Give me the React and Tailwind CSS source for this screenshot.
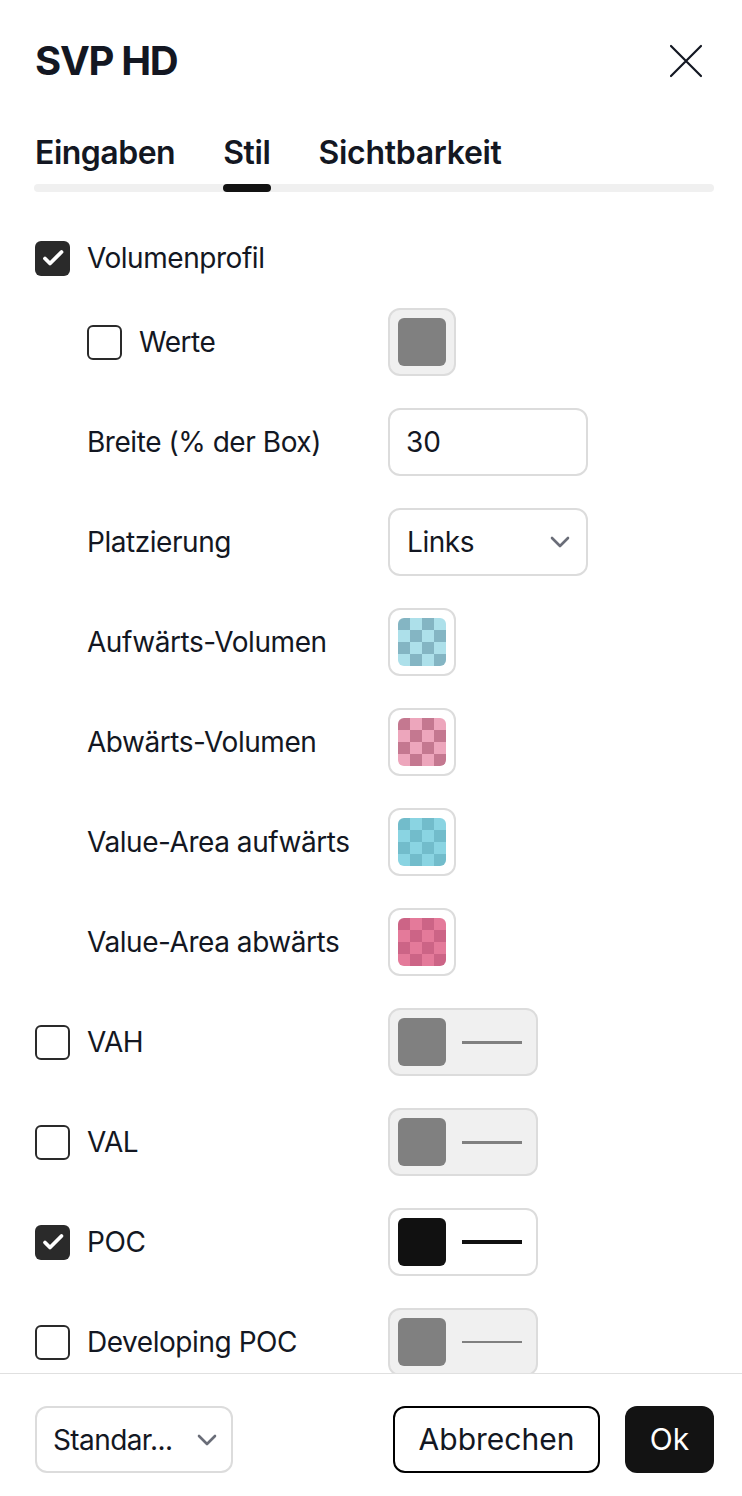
import React from 'react';

const SWATCHES = {
    up: { dark: 'bg-[#84b5c3]', light: 'bg-[#ade0ea]' },
    down: { dark: 'bg-[#c47890]', light: 'bg-[#eda6bc]' },
    vaUp: { dark: 'bg-[#72bccb]', light: 'bg-[#8ad4e2]' },
    vaDown: { dark: 'bg-[#cc6486]', light: 'bg-[#e47a9a]' },
};

function Checkbox({ checked }) {
    if (checked) {
        return (
            <div className="w-[35px] h-[35px] shrink-0 rounded-[6px] bg-[#2a2a2a] flex items-center justify-center">
                <svg width="24" height="24" viewBox="0 0 24 24" fill="none">
                    <path d="M4 12.5l5 5L20.5 6" stroke="#fff" strokeWidth="3.8" strokeLinecap="round" strokeLinejoin="round" />
                </svg>
            </div>
        );
    }
    return <div className="w-[35px] h-[35px] shrink-0 rounded-[6px] border-2 border-[#2a2a2a] bg-white" />;
}

function Chevron() {
    return (
        <svg width="20" height="12" viewBox="0 0 20 12" fill="none">
            <path d="M2 2l8 8 8-8" stroke="#6a6d78" strokeWidth="2.6" strokeLinecap="round" strokeLinejoin="round" />
        </svg>
    );
}

function Checker({ colors }) {
    const cells = [];
    for (let r = 0; r < 4; r++) {
        for (let c = 0; c < 4; c++) {
            cells.push(<div key={r + '-' + c} className={(r + c) % 2 === 0 ? colors.dark : colors.light} />);
        }
    }
    return <div className="w-[48px] h-[48px] rounded-[6px] overflow-hidden grid grid-cols-4 grid-rows-4">{cells}</div>;
}

function SwatchButton({ children, disabled, wide }) {
    return (
        <div
            className={
                'h-[68px] rounded-[12px] border-2 border-[#dcdcdc] flex items-center pl-[8px] gap-[16px] ' +
                (wide ? 'w-[150px] ' : 'w-[68px] ') +
                (disabled ? 'bg-[#f0f0f0]' : 'bg-white')
            }
        >
            {children}
        </div>
    );
}

function LineSwatch({ disabled, color, line }) {
    return (
        <SwatchButton disabled={disabled} wide>
            <div className={'w-[48px] h-[48px] rounded-[6px] ' + color} />
            <div className={'w-[60px] ' + line} />
        </SwatchButton>
    );
}

function Row({ label, indent, checkbox, children, tall = true }) {
    return (
        <div className={'flex items-center ' + (tall ? 'h-[68px]' : 'h-[36px]')}>
            <div className={'w-[353px] flex items-center gap-[17px] ' + (indent ? 'pl-[52px]' : '')}>
                {checkbox !== undefined && <Checkbox checked={checkbox} />}
                <span className="text-[28px] tracking-[-0.45px] text-[#131722] leading-none">{label}</span>
            </div>
            {children}
        </div>
    );
}

export default function App() {
    return (
        <div className="w-full h-[1496px] bg-white flex flex-col overflow-hidden font-['Inter',sans-serif] text-[#131722]">
            {/* Header */}
            <header className="flex items-center justify-between pl-[35px] pr-[39px] pt-[37px]">
                <h1 className="text-[40px] leading-[48px] font-bold tracking-[-1.3px]">SVP HD</h1>
                <svg width="34" height="34" viewBox="0 0 34 34" fill="none">
                    <path d="M2 2l30 30M32 2L2 32" stroke="#131722" strokeWidth="2.2" strokeLinecap="round" />
                </svg>
            </header>

            {/* Tabs */}
            <div className="pl-[34px] pr-[28px] pt-[48px]">
                <div className="flex gap-[48px] pl-[1px]">
                    <div className="text-[32px] leading-[40px] font-semibold tracking-[-0.5px] pb-[11px]">Eingaben</div>
                    <div className="text-[32px] leading-[40px] font-semibold tracking-[-0.4px] pb-[11px]">Stil</div>
                    <div className="text-[32px] leading-[40px] font-semibold tracking-[-0.3px] pb-[11px]">Sichtbarkeit</div>
                </div>
                <div className="h-[8px] rounded-full bg-[#f0f0f0] flex">
                    <div className="ml-[189px] w-[48px] h-[8px] rounded-full bg-[#131313]" />
                </div>
            </div>

            {/* Content */}
            <main className="flex-1 overflow-hidden px-[35px] pt-[48px]">
                <div className="flex flex-col gap-[32px]">
                    <Row label="Volumenprofil" checkbox={true} tall={false} />
                    <Row label="Werte" indent checkbox={false}>
                        <SwatchButton disabled>
                            <div className="w-[48px] h-[48px] rounded-[6px] bg-[#808080]" />
                        </SwatchButton>
                    </Row>
                    <Row label="Breite (% der Box)" indent>
                        <div className="w-[200px] h-[68px] rounded-[12px] border-2 border-[#dcdcdc] flex items-center pl-[16px] text-[28px]">
                            30
                        </div>
                    </Row>
                    <Row label="Platzierung" indent>
                        <div className="w-[200px] h-[68px] rounded-[12px] border-2 border-[#dcdcdc] flex items-center justify-between pl-[17px] pr-[16px] text-[28px] tracking-[-0.45px]">
                            <span>Links</span>
                            <Chevron />
                        </div>
                    </Row>
                    <Row label="Aufwärts-Volumen" indent>
                        <SwatchButton><Checker colors={SWATCHES.up} /></SwatchButton>
                    </Row>
                    <Row label="Abwärts-Volumen" indent>
                        <SwatchButton><Checker colors={SWATCHES.down} /></SwatchButton>
                    </Row>
                    <Row label="Value-Area aufwärts" indent>
                        <SwatchButton><Checker colors={SWATCHES.vaUp} /></SwatchButton>
                    </Row>
                    <Row label="Value-Area abwärts" indent>
                        <SwatchButton><Checker colors={SWATCHES.vaDown} /></SwatchButton>
                    </Row>
                    <Row label="VAH" checkbox={false}>
                        <LineSwatch disabled color="bg-[#808080]" line="h-[3px] bg-[#808080]" />
                    </Row>
                    <Row label="VAL" checkbox={false}>
                        <LineSwatch disabled color="bg-[#808080]" line="h-[3px] bg-[#808080]" />
                    </Row>
                    <Row label="POC" checkbox={true}>
                        <LineSwatch color="bg-[#111111]" line="h-[4px] bg-[#111111]" />
                    </Row>
                    <Row label="Developing POC" checkbox={false}>
                        <LineSwatch disabled color="bg-[#808080]" line="h-[2px] bg-[#808080]" />
                    </Row>
                </div>
            </main>

            {/* Footer */}
            <footer className="h-[123px] shrink-0 border-t border-[#e0e0e0] pl-[35px] pr-[28px] pt-[32px] flex items-start justify-between">
                <div className="w-[198px] h-[67px] rounded-[12px] border-2 border-[#dcdcdc] flex items-center justify-between pl-[16px] pr-[14px] text-[28px] tracking-[-0.6px]">
                    <span>Standar...</span>
                    <Chevron />
                </div>
                <div className="flex gap-[25px]">
                    <button className="w-[207px] h-[67px] rounded-[12px] border-2 border-black bg-white text-[30px] text-[#131722]">
                        Abbrechen
                    </button>
                    <button className="w-[89px] h-[67px] rounded-[12px] bg-[#131313] text-[30px] text-white">
                        Ok
                    </button>
                </div>
            </footer>
        </div>
    );
}
